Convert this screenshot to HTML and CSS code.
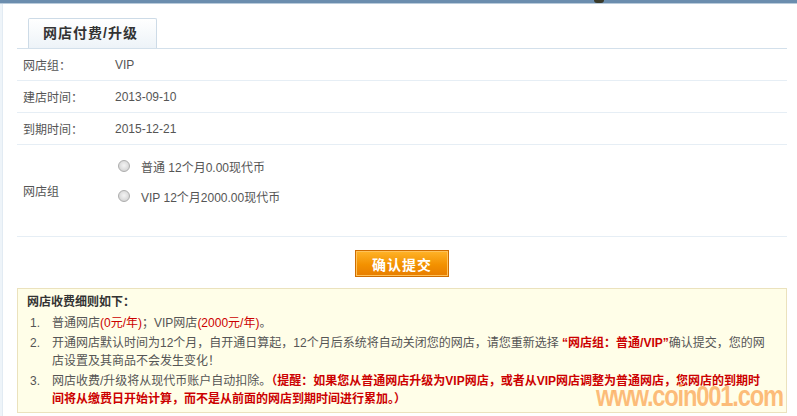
FILE: index.html
```html
<!DOCTYPE html>
<html lang="zh-CN">
<head>
<meta charset="utf-8">
<title>网店付费/升级</title>
<link rel="stylesheet" href="styles.css">
</head>
<body>
<div class="topbar"><span class="topbar-knob"></span></div>
<div class="page">
  <div class="sidestrip"></div>
  <div class="main">
    <div class="tabs">
      <div class="tab">网店付费/升级</div>
    </div>
    <div class="row">
      <div class="label">网店组：</div>
      <div class="value">VIP</div>
    </div>
    <div class="row">
      <div class="label">建店时间：</div>
      <div class="value">2013-09-10</div>
    </div>
    <div class="row">
      <div class="label">到期时间：</div>
      <div class="value">2015-12-21</div>
    </div>
    <div class="row row-radios">
      <div class="label">网店组</div>
      <div class="radios">
        <label class="radio"><input type="radio" name="grp"><span>普通 12个月0.00现代币</span></label>
        <label class="radio"><input type="radio" name="grp"><span>VIP 12个月2000.00现代币</span></label>
      </div>
    </div>
    <div class="actions">
      <button class="btn-submit" type="button">确认提交</button>
    </div>
    <div class="notice">
      <div class="notice-title">网店收费细则如下：</div>
      <ol class="notice-list">
        <li>普通网店<span class="red">(0元/年)</span>；VIP网店<span class="red">(2000元/年)</span>。</li>
        <li>开通网店默认时间为12个月，自开通日算起，12个月后系统将自动关闭您的网店，请您重新选择 <b class="red">“网店组：普通/VIP”</b>确认提交，您的网<br>店设置及其商品不会发生变化！</li>
        <li>网店收费/升级将从现代币账户自动扣除。<b class="red">（提醒：如果您从普通网店升级为VIP网店，或者从VIP网店调整为普通网店，您网店的到期时<br>间将从缴费日开始计算，而不是从前面的网店到期时间进行累加。）</b></li>
      </ol>
      <div class="watermark">www.coin001.com</div>
    </div>
  </div>
</div>
</body>
</html>
```
FILE: styles.css
```css
html, body {
  margin: 0;
  padding: 0;
  background: #ffffff;
}
body {
  font-family: "Liberation Sans", "Noto Sans CJK SC", sans-serif;
  font-size: 12px;
  color: #555555;
  width: 797px;
  height: 416px;
  overflow: hidden;
}
.topbar {
  position: relative;
  height: 3px;
  background: #6b8dae;
  border-bottom: 1px solid #b9cbdb;
}
.topbar-knob {
  position: absolute;
  left: 594px;
  top: 0;
  width: 10px;
  height: 3px;
  background: #3a3a2a;
  border-radius: 0 0 4px 4px;
}
.page {
  display: flex;
  height: 412px;
}
.sidestrip {
  width: 2px;
  background: #eef4f9;
  border-right: 1px solid #e2ebf3;
}
.main {
  position: relative;
  margin-left: 14px;
  width: 770px;
  padding-top: 14px;
}
.tabs {
  padding-left: 11px;
  border-bottom: 1px solid #d3e0eb;
  height: 30px;
}
.tab {
  display: inline-block;
  box-sizing: border-box;
  width: 129px;
  height: 30px;
  border: 1px solid #cddbe7;
  border-bottom: none;
  border-radius: 2px 2px 0 0;
  background: linear-gradient(#ffffff, #edf3f8);
  padding-left: 14px;
  font-size: 14px;
  font-weight: bold;
  line-height: 29px;
  color: #333333;
  letter-spacing: 1px;
}
.row {
  display: grid;
  grid-template-columns: 98px 1fr;
  align-items: center;
  height: 31px;
  border-bottom: 1px solid #e6eef5;
}
.label {
  padding-left: 6px;
  color: #555555;
}
.value {
  color: #555555;
}
.row-radios {
  height: 91px;
}
.radios {
  padding-top: 6px;
  padding-bottom: 25px;
}
.radio {
  display: flex;
  align-items: center;
  height: 30px;
  color: #555555;
}
.radio input {
  appearance: none;
  -webkit-appearance: none;
  box-sizing: border-box;
  width: 12px;
  height: 12px;
  margin: 0 11px 0 3px;
  border-radius: 50%;
  border: 1px solid #adadad;
  background: radial-gradient(circle at 50% 45%, #f4f4f4 0, #dedede 55%, #c8c8c8 100%);
}
.actions {
  display: flex;
  justify-content: center;
  padding: 13px 0 11px;
}
.btn-submit {
  box-sizing: border-box;
  width: 94px;
  height: 27px;
  border: 1px solid #cf6d00;
  box-shadow: inset 0 0 0 1px #ffc25a;
  background: linear-gradient(#ffb329, #f39100 55%, #e77d00);
  color: #ffffff;
  font-family: "Noto Sans CJK SC", sans-serif;
  font-size: 14px;
  font-weight: bold;
  letter-spacing: 1px;
  padding: 0;
  cursor: pointer;
}
.notice {
  position: relative;
  box-sizing: border-box;
  height: 125px;
  border: 1px solid #ebe2bd;
  background: #fffee8;
  padding: 4px 2px 0 9px;
}
.notice-title {
  font-weight: bold;
  color: #333333;
  line-height: 18px;
}
.notice-list {
  list-style: none;
  margin: 3px 0 0;
  padding: 0;
  counter-reset: item;
}
.notice-list li {
  counter-increment: item;
  padding-left: 25px;
  line-height: 18px;
  margin-bottom: 2px;
}
.notice-list li::before {
  content: counter(item) ".";
  display: inline-block;
  width: 22px;
  margin-left: -22px;
}
.red {
  color: #cc0000;
}
b.red {
  font-weight: bold;
}
.watermark {
  position: absolute;
  right: 3px;
  bottom: 0;
  font-family: "Liberation Sans", sans-serif;
  font-size: 29px;
  line-height: 32px;
  font-weight: bold;
  letter-spacing: -1.5px;
  color: rgba(252, 170, 90, 0.78);
  transform: scaleX(0.82);
  transform-origin: right bottom;
  pointer-events: none;
}
```
